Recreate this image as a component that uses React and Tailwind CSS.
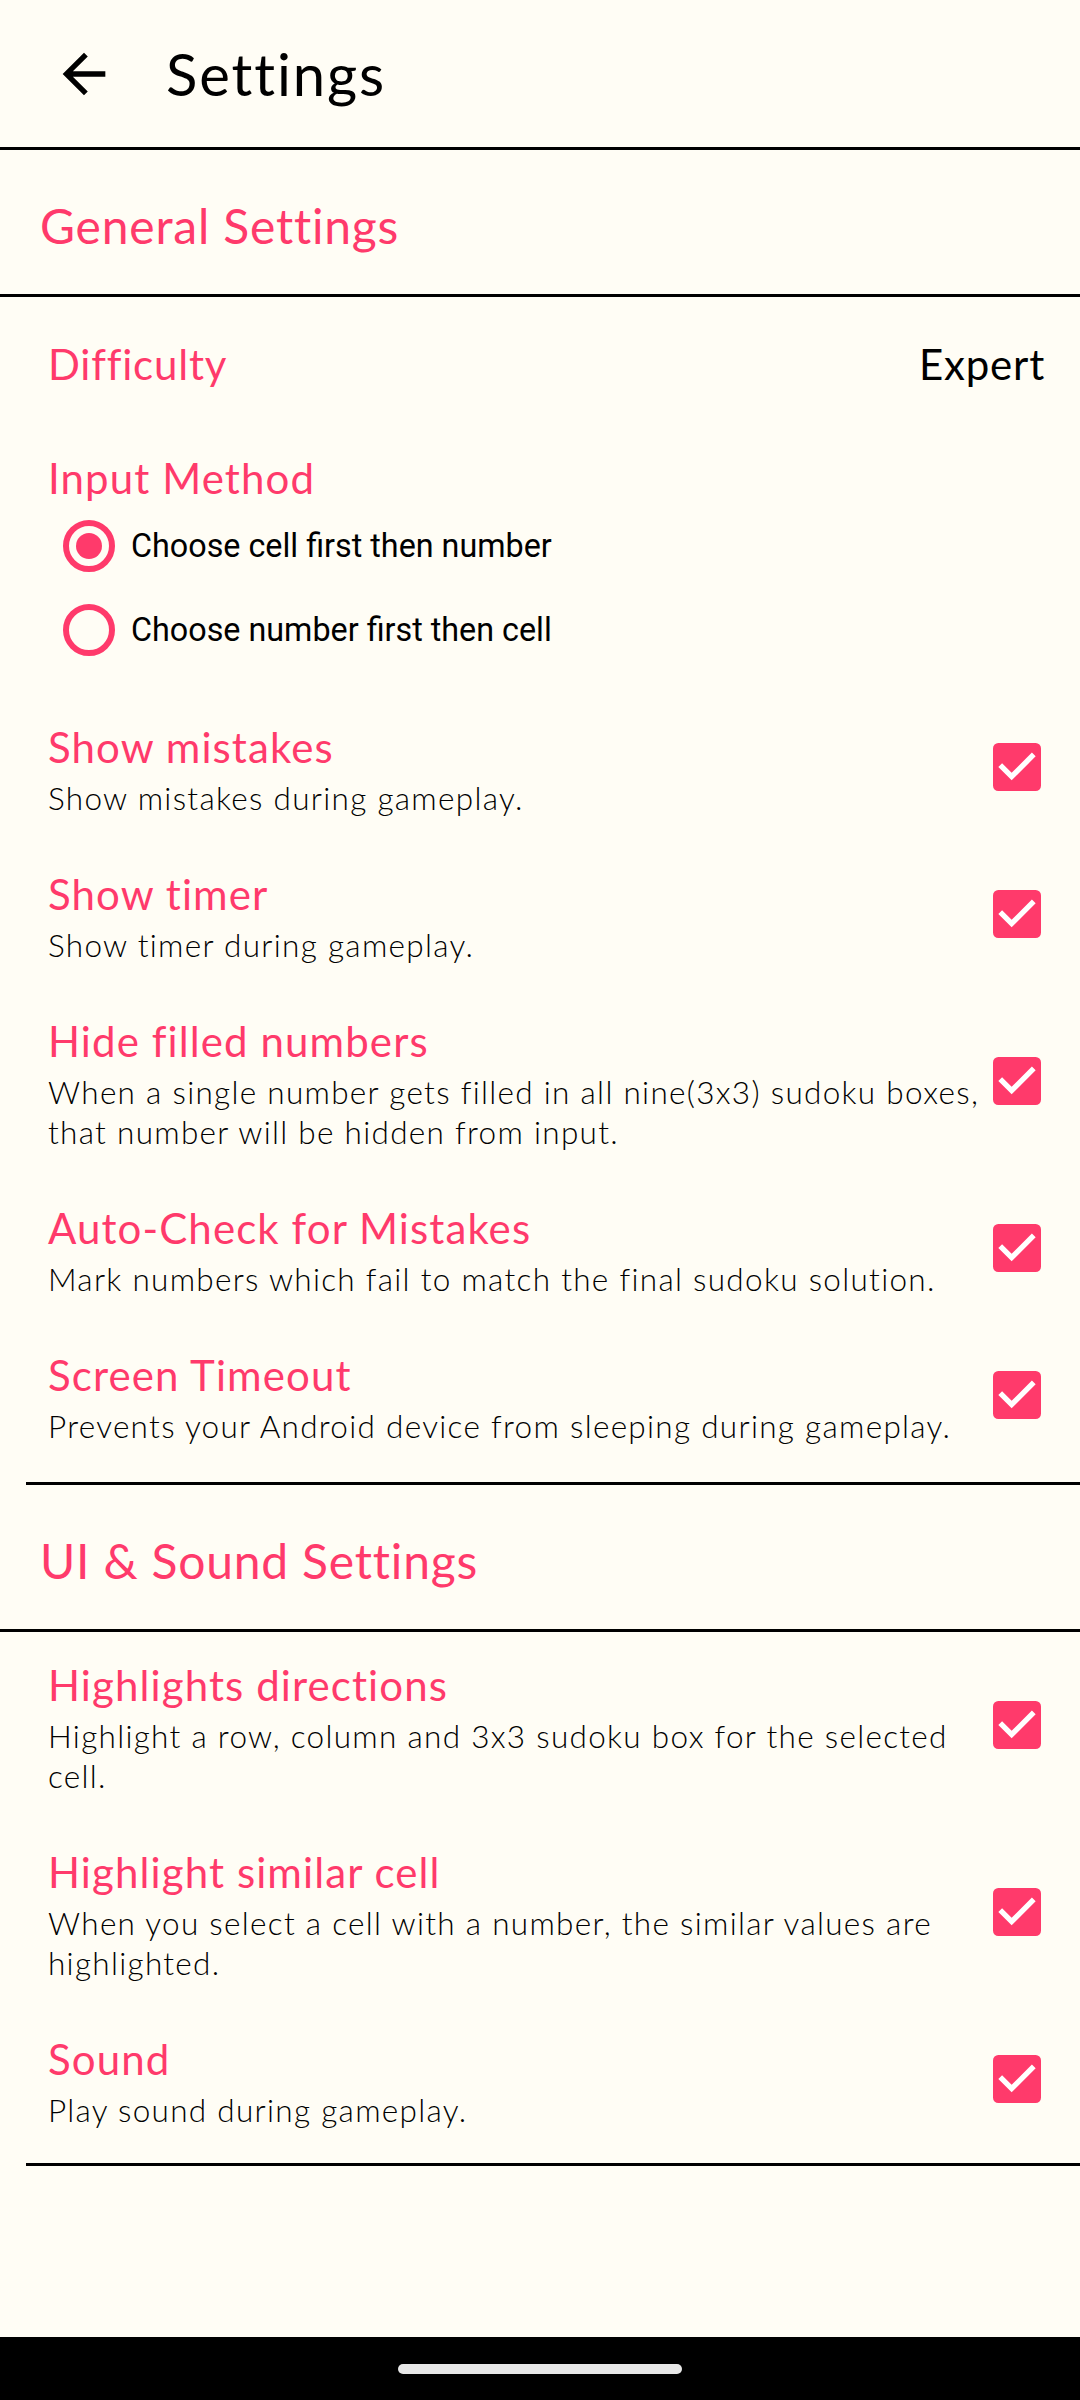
const general = [
  { title: "Show mistakes", lines: ["Show mistakes during gameplay."] },
  { title: "Show timer", lines: ["Show timer during gameplay."] },
  {
    title: "Hide filled numbers",
    lines: [
      "When a single number gets filled in all nine(3x3) sudoku boxes,",
      "that number will be hidden from input.",
    ],
  },
  { title: "Auto-Check for Mistakes", lines: ["Mark numbers which fail to match the final sudoku solution."] },
  { title: "Screen Timeout", lines: ["Prevents your Android device from sleeping during gameplay."] },
];

const uiSound = [
  {
    title: "Highlights directions",
    lines: ["Highlight a row, column and 3x3 sudoku box for the selected", "cell."],
  },
  {
    title: "Highlight similar cell",
    lines: ["When you select a cell with a number, the similar values are", "highlighted."],
  },
  { title: "Sound", lines: ["Play sound during gameplay."] },
];

function CheckBox() {
  return (
    <svg width="48" height="48" viewBox="3 3 18 18" className="shrink-0">
      <rect x="3" y="3" width="18" height="18" rx="2" fill="#ff3a6b" />
      <path d="M10 17l-5-5 1.41-1.41L10 14.17l7.59-7.59L19 8l-9 9z" fill="#ffffff" />
    </svg>
  );
}

function Radio({ checked, label }) {
  return (
    <div className="flex items-center h-[84px] pl-[63px]">
      <div className="w-[52px] h-[52px] rounded-full border-[6px] border-[#ff3a6b] flex items-center justify-center">
        {checked && <div className="w-[26px] h-[26px] rounded-full bg-[#ff3a6b]" />}
      </div>
      <span className="ml-[16px] font-[family-name:Roboto,sans-serif] text-[32.3px] text-black">{label}</span>
    </div>
  );
}

function SettingRow({ item }) {
  return (
    <div className="flex items-center pl-[48px] pr-[39px] pt-[22px] pb-[23px]">
      <div className="flex-1 min-w-0">
        <div className="text-[42px] leading-[62px] tracking-[1.1px] text-[#ff3a6b]">{item.title}</div>
        {item.lines.map((l) => (
          <div key={l} className="text-[31.5px] leading-[40px] tracking-[1.3px] font-light text-black whitespace-nowrap">
            {l}
          </div>
        ))}
      </div>
      <CheckBox />
    </div>
  );
}

function SectionHeader({ children }) {
  return (
    <div className="h-[147px] border-b-[3px] border-black flex items-center pl-[40px] pt-[7px] text-[48px] tracking-[0.8px] text-[#ff3a6b]">
      {children}
    </div>
  );
}

export default function App() {
  return (
    <div className="min-h-[2400px] flex flex-col bg-[#fffdf5] font-[family-name:Lato,sans-serif]">
      <div className="h-[150px] border-b-[3px] border-black flex items-center">
        <svg width="64" height="64" viewBox="0 0 24 24" className="ml-[52px]">
          <path d="M20 11H7.83l5.59-5.59L12 4l-8 8 8 8 1.41-1.41L7.83 13H20v-2z" fill="#000000" />
        </svg>
        <span className="ml-[50px] text-[58px] tracking-[1.9px] text-black">Settings</span>
      </div>

      <SectionHeader>General Settings</SectionHeader>

      <div className="h-[134px] flex items-center justify-between pl-[48px] pr-[35px]">
        <span className="text-[42px] tracking-[0.8px] text-[#ff3a6b]">Difficulty</span>
        <span className="text-[42px] tracking-[0.8px] text-black">Expert</span>
      </div>

      <div className="pt-[21px] pb-[22px]">
        <div className="pl-[48px] h-[52px] flex items-center text-[42px] tracking-[1.1px] text-[#ff3a6b]">Input Method</div>
        <Radio checked label="Choose cell first then number" />
        <Radio label="Choose number first then cell" />
      </div>

      {general.map((item) => (
        <SettingRow key={item.title} item={item} />
      ))}

      <div className="mt-[13px] ml-[26px] h-[3px] bg-black" />

      <SectionHeader>UI &amp; Sound Settings</SectionHeader>

      {uiSound.map((item) => (
        <SettingRow key={item.title} item={item} />
      ))}

      <div className="mt-[10px] ml-[26px] h-[3px] bg-black" />

      <div className="flex-1" />

      <div className="h-[63px] bg-black flex justify-center pt-[27px]">
        <div className="w-[284px] h-[10px] rounded-full bg-[#e8e8e8]" />
      </div>
    </div>
  );
}
